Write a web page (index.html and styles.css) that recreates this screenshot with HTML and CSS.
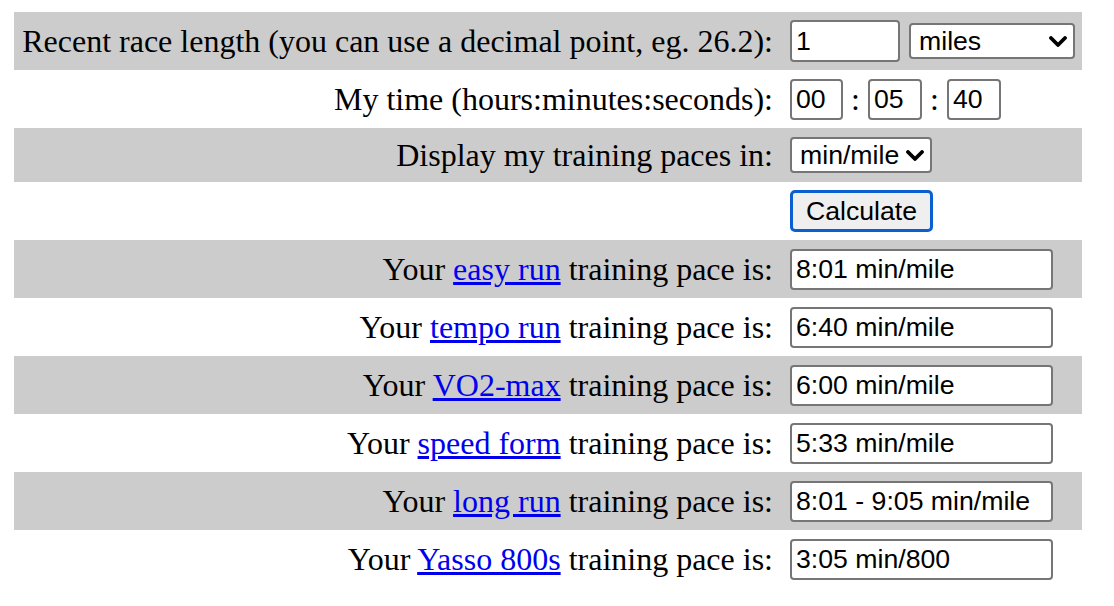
FILE: index.html
```html
<!DOCTYPE html>
<html>
<head>
<meta charset="utf-8">
<title>Training Pace Calculator</title>
<link rel="stylesheet" href="styles.css">
</head>
<body>
<table class="calc">
  <colgroup><col class="c-label"><col class="c-field"></colgroup>
  <tr class="odd">
    <td class="label">Recent race length (you can use a decimal point, eg. 26.2):</td>
    <td class="field"><div class="line gap9"><input class="inp w110" type="text" value="1"><span class="sel w166"><span class="sel-text">miles</span><svg class="chev" viewBox="0 0 18 11" width="18" height="11"><path d="M2 2 L9 9 L16 2" fill="none" stroke="#000" stroke-width="3.8" stroke-linecap="round" stroke-linejoin="round"/></svg></span></div></td>
  </tr>
  <tr>
    <td class="label">My time (hours:minutes:seconds):</td>
    <td class="field"><div class="line"><input class="inp w53 h41" type="text" value="00"><span class="colon">:</span><input class="inp w54 h41" type="text" value="05"><span class="colon">:</span><input class="inp w54 h41" type="text" value="40"></div></td>
  </tr>
  <tr class="odd short">
    <td class="label">Display my training paces in:</td>
    <td class="field"><div class="line"><span class="sel w142"><span class="sel-text">min/mile</span><svg class="chev" viewBox="0 0 18 11" width="18" height="11"><path d="M2 2 L9 9 L16 2" fill="none" stroke="#000" stroke-width="3.8" stroke-linecap="round" stroke-linejoin="round"/></svg></span></div></td>
  </tr>
  <tr>
    <td class="label"></td>
    <td class="field"><div class="line"><button class="btn" type="button">Calculate</button></div></td>
  </tr>
  <tr class="odd">
    <td class="label">Your <a href="#">easy run</a> training pace is:</td>
    <td class="field"><div class="line"><input class="inp out" type="text" value="8:01 min/mile"></div></td>
  </tr>
  <tr>
    <td class="label">Your <a href="#">tempo run</a> training pace is:</td>
    <td class="field"><div class="line"><input class="inp out" type="text" value="6:40 min/mile"></div></td>
  </tr>
  <tr class="odd">
    <td class="label">Your <a href="#">VO2-max</a> training pace is:</td>
    <td class="field"><div class="line"><input class="inp out" type="text" value="6:00 min/mile"></div></td>
  </tr>
  <tr>
    <td class="label">Your <a href="#">speed form</a> training pace is:</td>
    <td class="field"><div class="line"><input class="inp out" type="text" value="5:33 min/mile"></div></td>
  </tr>
  <tr class="odd">
    <td class="label">Your <a href="#">long run</a> training pace is:</td>
    <td class="field"><div class="line"><input class="inp out" type="text" value="8:01 - 9:05 min/mile"></div></td>
  </tr>
  <tr>
    <td class="label">Your <a href="#">Yasso 800s</a> training pace is:</td>
    <td class="field"><div class="line"><input class="inp out" type="text" value="3:05 min/800"></div></td>
  </tr>
</table>
</body>
</html>
```

FILE: styles.css
```css
html, body {
  margin: 0;
  padding: 0;
  background: #fff;
}
body {
  padding: 12px 14px;
  font-family: "Liberation Serif", "Times New Roman", serif;
  font-size: 32px;
  color: #000;
}
.calc {
  border-collapse: collapse;
  border-spacing: 0;
  table-layout: fixed;
  width: 1068px;
}
.c-label { width: 768px; }
.c-field { width: 300px; }
.calc tr.odd td {
  background: #cccccc;
}
.calc td {
  box-sizing: content-box;
  height: 42px;
  padding: 8px 0;
  vertical-align: middle;
}
.calc tr.short td {
  height: 36px;
  padding-top: 9px;
  padding-bottom: 9px;
}
.calc td.label {
  text-align: right;
  padding-right: 9px;
  white-space: nowrap;
  line-height: 36px;
}
.calc td.field {
  padding-left: 8px;
}
.label a {
  color: #0000ee;
  text-decoration: underline;
}
.line {
  display: flex;
  align-items: center;
}
.gap9 { gap: 9px; }
.inp {
  box-sizing: border-box;
  height: 42px;
  margin: 0;
  border: 2px solid #767676;
  border-radius: 4px;
  padding: 0 4px;
  font-family: "Liberation Sans", Arial, sans-serif;
  font-size: 26.67px;
  color: #000;
  background: #fff;
  outline: none;
}
.w110 { width: 110px; }
.w53 { width: 53px; }
.w54 { width: 54px; }
.h41 { height: 41px; }
.out { width: 263px; height: 41px; }
.colon {
  width: 25px;
  text-align: center;
  line-height: 36px;
}
.sel {
  position: relative;
  box-sizing: border-box;
  display: flex;
  align-items: center;
  height: 36px;
  border: 2px solid #767676;
  border-radius: 4px;
  background: #fff;
  padding-left: 8px;
  font-family: "Liberation Sans", Arial, sans-serif;
  font-size: 26.67px;
  color: #000;
}
.w166 { width: 166px; }
.w142 { width: 142px; }
.chev {
  position: absolute;
  right: 6px;
  top: 11px;
}
.btn {
  box-sizing: border-box;
  width: 143px;
  height: 42px;
  margin: 0;
  border: 3px solid #0b5fd1;
  border-radius: 5px;
  background: #efefef;
  font-family: "Liberation Sans", Arial, sans-serif;
  font-size: 26.67px;
  color: #000;
  padding: 0;
}
```
